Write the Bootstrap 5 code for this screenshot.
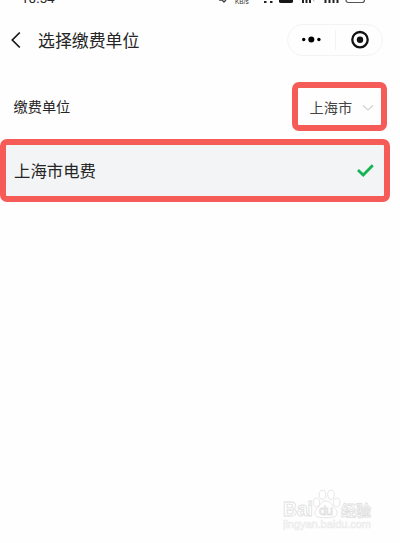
<!DOCTYPE html>
<html lang="zh-CN">
<head>
<meta charset="utf-8">
<meta name="viewport" content="width=device-width, initial-scale=1">
<title>选择缴费单位</title>
<link href="https://cdn.jsdelivr.net/npm/bootstrap@5.3.0/dist/css/bootstrap.min.css" rel="stylesheet">
<style>
body{font-family:"Noto Sans","Noto Sans CJK SC",sans-serif;color:#252525;background:#fefefe;line-height:1}
svg{display:block;flex:none}
.screen{width:400px;height:543px}
.status{height:10px;padding-left:21px}
.clock{font:400 13.5px/14px "Roboto",sans-serif;height:14px;margin-top:-9px;width:45px}
.signals{margin-left:152px}
.title-bar{height:60px;padding:0 17px 0 10px}
.page-title{font-size:16.9px;line-height:24px;font-family:"Noto Sans CJK SC",sans-serif;margin-left:16px}
.capsule{width:96px;height:32px;border:1px solid #f3f3f3}
.capsule-line{width:1px;height:20px;background:#f3f3f3}
.unit-row{height:49px;margin-top:12px;padding:0 13.5px 0 13.5px}
.unit-label{font:14.2px/22px "Noto Sans CJK SC",sans-serif;margin-top:-2px}
.city{width:95px;height:49px;border:6.5px solid #f65c57;border-radius:7px;padding:0 7px 0 12px;color:#444}
.city-name{font:14.2px/22px "Noto Sans CJK SC",sans-serif}
.choice{width:390px;height:62.5px;margin-top:8px;border:6.5px solid #f65c57;border-radius:7px;background:#f3f4f5;padding:0 10.5px 0 8px}
.choice-name{font:16.4px/24px "Noto Sans CJK SC",sans-serif}
.watermark{margin:auto 23px 8px 0}
</style>
</head>
<body>
<main class="screen d-flex flex-column overflow-hidden">
  <div class="status d-flex align-items-start">
    <div class="clock">10:54</div>
    <svg class="signals" width="150" height="5" viewBox="218 0 150 5" aria-hidden="true">
      <path d="M219 0h3l2 2 2-2" fill="none" stroke="#444" stroke-width="1.4"/>
      <text x="235" y="3.500" font-family="Liberation Sans" font-size="6.500" fill="#333">KB/s</text>
      <path d="M264 1h2.500v2H264zM270 1h2.500v2H270zM302 0h2v3h-2zM305.500 0h2v3h-2zM309 0h2v3h-2zM324.500 0h2v3h-2zM328.500 0h2v3h-2zM332.500 0h2v3h-2zM336.500 0h2v3h-2z" fill="#222"/>
      <path d="M313 0l1.500 1.500" stroke="#bbb"/>
      <path d="M279 0h14v1.500q0 1.500-2 1.500h-10q-2 0-2-1.500z" fill="#171717"/>
      <path d="M346 0q0 2.500 2.500 2.500h13.500q2.500 0 2.500-2.500" fill="none" stroke="#555" stroke-width="1.200"/>
    </svg>
  </div>
  <header class="title-bar d-flex align-items-center">
    <svg width="12" height="18" viewBox="0 0 12 18" aria-label="返回"><path d="M9.800 1.500L2.300 9l7.500 7.500" fill="none" stroke="#171717" stroke-width="1.700"/></svg>
    <h1 class="page-title mb-0 fw-normal">选择缴费单位</h1>
    <div class="capsule rounded-pill d-flex align-items-center ms-auto">
      <svg width="47" height="30" viewBox="0 0 47 30" aria-label="更多"><circle cx="15.700" cy="14.500" r="1.700"/><circle cx="23.300" cy="14.500" r="3"/><circle cx="30.900" cy="14.500" r="1.700"/></svg>
      <span class="capsule-line"></span>
      <svg width="46" height="30" viewBox="0 0 46 30" aria-label="关闭"><circle cx="24" cy="14.700" r="7.700" fill="none" stroke="#111" stroke-width="2.300"/><circle cx="24" cy="14.700" r="3.200" fill="#111"/></svg>
    </div>
  </header>
  <section class="unit-row d-flex align-items-center justify-content-between flex-shrink-0">
    <span class="unit-label">缴费单位</span>
    <div class="city d-flex align-items-center justify-content-between">
      <span class="city-name">上海市</span>
      <svg width="12" height="8" viewBox="0 0 12 8" aria-hidden="true"><path d="M1 2.500l5 4.500 5-4.500" fill="none" stroke="#d2d2d2" stroke-width="1.200"/></svg>
    </div>
  </section>
  <section class="choice d-flex align-items-center justify-content-between flex-shrink-0">
    <span class="choice-name">上海市电费</span>
    <svg width="17" height="13" viewBox="0 0 17 13" aria-label="已选择"><path d="M2 7l4.200 4L14.800 2.200" fill="none" stroke="#14b455" stroke-width="2.800" stroke-linecap="square"/></svg>
  </section>
  <svg class="watermark align-self-end" width="94" height="48" viewBox="0 0 94 48" role="img">
    <g fill="#fff" stroke="#e0e0e0" stroke-width=".8">
      <text x="0" y="29" font-family="Liberation Sans" font-weight="bold" font-size="19.500" textLength="30">Bai</text>
      <ellipse cx="33.500" cy="15.500" rx="3.200" ry="4.300"/><ellipse cx="39.500" cy="7.800" rx="3.300" ry="4.600"/><ellipse cx="48" cy="7.800" rx="3.300" ry="4.600"/><ellipse cx="53.700" cy="15.500" rx="3.200" ry="4.300"/>
      <path d="M43 14c-5 0-6 5-9 7.500s-3 7 1 8.500c3 .9 13 .9 16 0 4-1.500 4-6 1-8.500S48 14 43 14z"/>
      <text x="36" y="28" font-family="Liberation Sans" font-size="13" textLength="14">du</text>
      <text x="58" y="29" font-family="Noto Sans CJK SC" font-weight="bold" font-size="15" textLength="30" lengthAdjust="spacingAndGlyphs">经验</text>
    </g>
    <text x="0" y="41" font-family="Liberation Sans" font-size="11" textLength="88" fill="#fbfbfb" stroke="#ebebeb" stroke-width=".6">jingyan.baidu.com</text>
  </svg>
</main>
<script src="https://cdn.jsdelivr.net/npm/bootstrap@5.3.0/dist/js/bootstrap.bundle.min.js"></script>
</body>
</html>
